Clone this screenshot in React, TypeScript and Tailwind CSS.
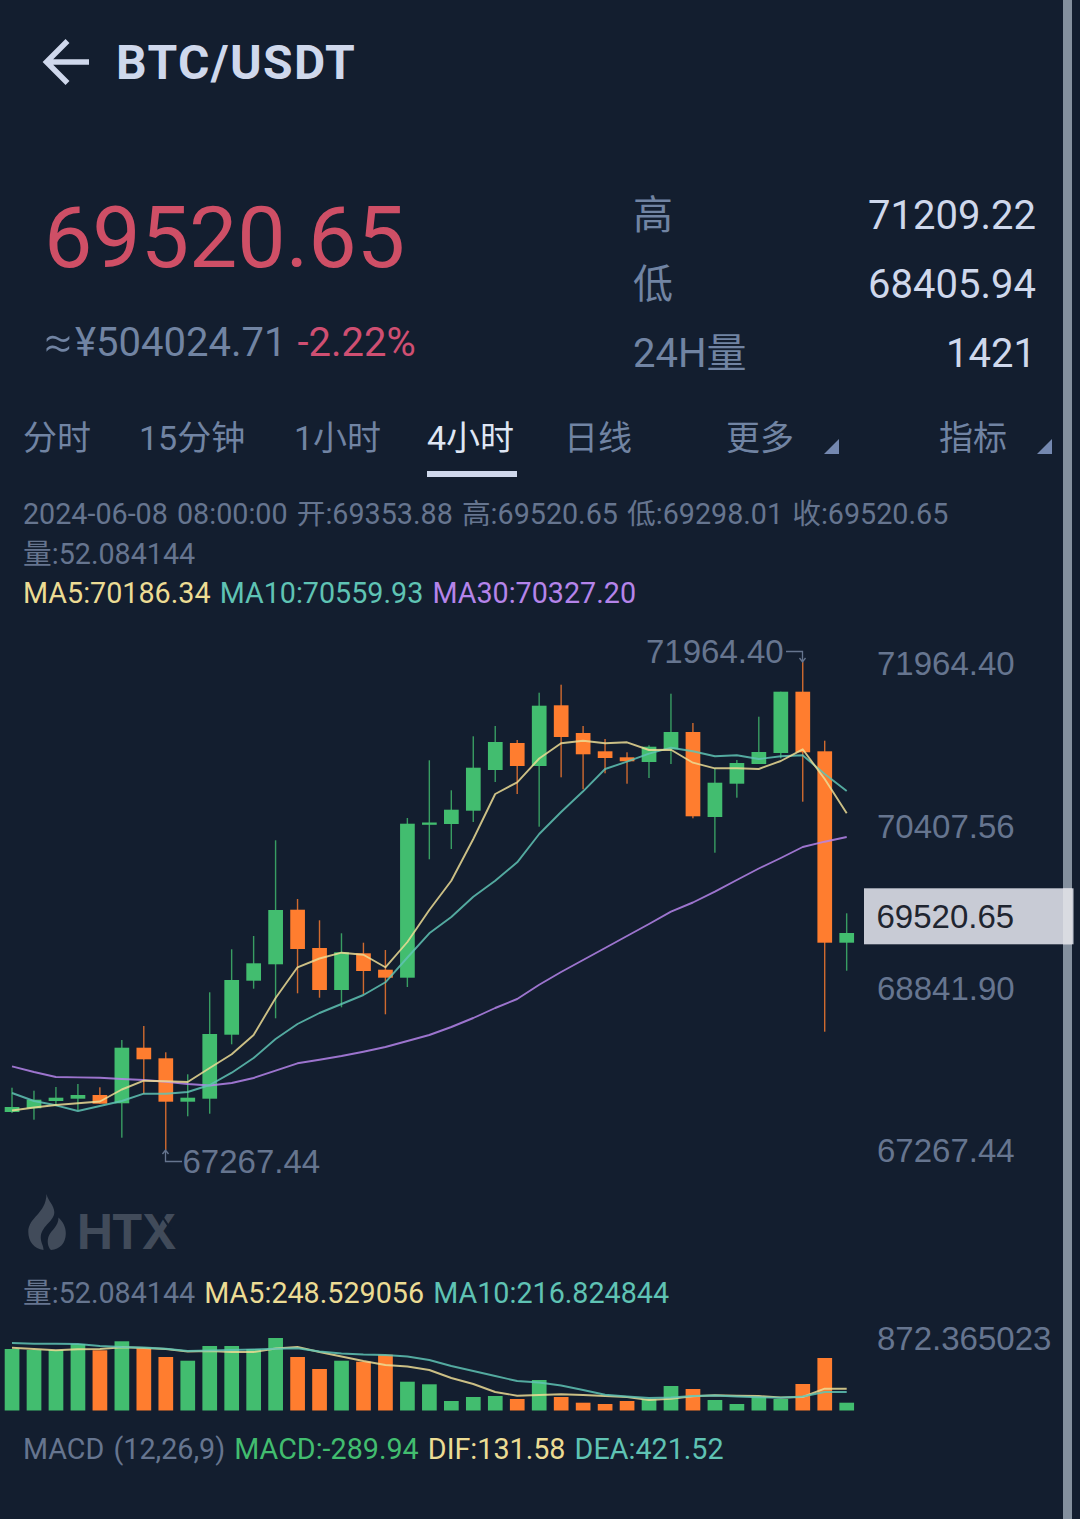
import React from 'react';

const UP = '#42bd6f';
const DOWN = '#ff7d2f';
const YELLOW = '#ecdc94';
const TEAL = '#5fc3b4';
const PURPLE = '#b584ea';

const STEP = 21.965;
const centerX = (i: number) => 12 + i * STEP;

// [rising, body top, body bottom, wick top, wick bottom]
const candles: [number, number, number, number, number][] = [
  [1, 1107, 1112, 1087.7, 1113],
  [1, 1099.7, 1108.3, 1090.7, 1119.7],
  [1, 1097.7, 1101, 1087, 1105],
  [1, 1095, 1098.7, 1084, 1110],
  [0, 1095, 1103.7, 1087.3, 1103.7],
  [1, 1047.7, 1103.3, 1040, 1137.7],
  [0, 1047.7, 1059.3, 1026, 1094],
  [0, 1058.3, 1101.7, 1052.3, 1150],
  [1, 1097.7, 1101.7, 1074.3, 1116.3],
  [1, 1034, 1098.7, 992.3, 1113.7],
  [1, 980, 1034.7, 949.3, 1044.3],
  [1, 963.3, 980.7, 936, 988.7],
  [1, 910, 964.3, 840.3, 1018.3],
  [0, 909.7, 949, 899, 993.3],
  [0, 948, 990, 920.3, 997.7],
  [1, 952.3, 990, 933.3, 1007.3],
  [0, 953.3, 971, 942.7, 994],
  [0, 969.7, 977.7, 950, 1014.3],
  [1, 823.7, 977.7, 818, 987],
  [1, 822.5, 824.8, 760.3, 859.3],
  [1, 809.7, 824, 790.3, 849],
  [1, 767.7, 810.7, 736.3, 822],
  [1, 742, 770, 726, 782],
  [0, 743, 766, 740, 794],
  [1, 705.7, 766, 692.7, 826.7],
  [0, 705.3, 737, 684.7, 777.3],
  [0, 733, 754.3, 726, 789.3],
  [0, 751.3, 758, 739, 773.3],
  [0, 757.3, 761.3, 752.3, 783.7],
  [1, 746.7, 762, 745.3, 778],
  [1, 732, 749.3, 693.7, 764],
  [0, 732, 816.3, 723, 818.3],
  [1, 782.7, 817, 768.3, 852.7],
  [1, 763, 783.7, 760, 797.7],
  [1, 752, 764, 716.7, 764],
  [1, 691.7, 753, 691.7, 758.3],
  [0, 691.7, 752.3, 661.7, 801.7],
  [0, 751.3, 942.7, 740.7, 1031.7],
  [1, 933, 942.7, 913.3, 970.7],
];

const ma5 = [
  1110.5, 1107.5, 1105, 1103.3, 1101.5, 1089.5, 1080.7, 1081.3, 1082, 1068, 1054.3, 1035, 998, 967.3, 958.5, 952.7,
  954.7, 967.3, 942, 910, 880.7, 839, 794, 782.3, 758.5, 743.3, 740.8, 743.3, 742.3, 750, 749.7, 762.7, 768.3, 768.3,
  769, 761, 749.3, 779, 813.3,
];
const ma10 = [
  1093, 1101, 1105.3, 1111, 1106, 1101, 1093.7, 1093.7, 1092, 1085, 1072.7, 1058, 1039, 1024, 1013, 1004, 995, 982.3,
  957.5, 933.3, 917, 896.7, 880.7, 862.3, 834, 812, 791.3, 769, 761.7, 753.7, 747.7, 751.3, 756.3, 755.3, 759, 756.3,
  755.3, 774, 791,
];
const ma30 = [
  1066.3, 1072, 1077, 1077.4, 1077.7, 1079, 1080, 1081.7, 1084, 1085.5, 1083, 1078, 1070.7, 1063.3, 1059.7, 1056,
  1051.7, 1047, 1041, 1035, 1027, 1018, 1008, 999, 984.7, 972, 960, 948, 936, 924, 911.7, 902.5, 891.7, 880, 868.5, 858,
  847, 841.7, 837,
];

const volumes = [
  1349, 1350, 1350, 1344, 1350.3, 1341.3, 1348.3, 1357, 1360.7, 1346, 1346, 1349, 1338, 1357, 1369, 1360.7, 1361.7,
  1354.7, 1381.7, 1384.3, 1401, 1397, 1396, 1399, 1380, 1397, 1402.7, 1404, 1401, 1399, 1386, 1389, 1400, 1404, 1397,
  1399, 1384, 1358, 1402.7,
];
const volMa5 = [
  1347.7, 1349, 1350.3, 1349.3, 1349, 1347.3, 1348, 1349, 1351.5, 1351, 1352, 1352, 1348.5, 1347, 1352, 1356.5, 1361,
  1365, 1366.5, 1370, 1378, 1384, 1392, 1395.7, 1395, 1394.3, 1395, 1396, 1397, 1400, 1398.7, 1396.3, 1395.3, 1395.7,
  1396, 1397.5, 1397, 1388.7, 1388.7,
];
const volMa10 = [
  1343, 1343.7, 1343.7, 1344, 1346, 1347, 1347.5, 1348.7, 1351, 1350.5, 1350, 1349.5, 1348.7, 1348.3, 1351.5, 1353.5,
  1354.5, 1355, 1356.5, 1360, 1366, 1371, 1376, 1381, 1382.5, 1385.5, 1390, 1394.7, 1396.5, 1398, 1397.5, 1396, 1395.5,
  1396.5, 1397.3, 1397.7, 1396.5, 1392, 1392,
];

const stats = [
  { label: '高', value: '71209.22' },
  { label: '低', value: '68405.94' },
  { label: '24H量', value: '1421' },
];

const tabs = [
  { label: '分时' },
  { label: '15分钟' },
  { label: '1小时' },
  { label: '4小时', active: true },
  { label: '日线' },
  { label: '更多', menu: true },
  { label: '指标', menu: true },
];

const axis = [
  { y: 675, value: '71964.40' },
  { y: 838, value: '70407.56' },
  { y: 999.5, value: '68841.90' },
  { y: 1162, value: '67267.44' },
];

function Line({ values, color }: { values: number[]; color: string }) {
  const points = values.map((y, i) => `${centerX(i).toFixed(1)},${y}`).join(' ');
  return <polyline points={points} fill="none" stroke={color} strokeWidth="1.9" strokeOpacity="0.85" strokeLinejoin="round" />;
}

function Header() {
  return (
    <header className="flex h-[124px] items-center pl-[42px] text-[#cfd8ec]">
      <svg width="48" height="48" viewBox="0 0 48 48" fill="none" stroke="currentColor" strokeWidth="5.5">
        <path d="M47 24H5M25.500 3L4.500 24L25.500 45" />
      </svg>
      <h1 className="mt-[2px] ml-[26px] text-[48px] leading-none font-bold tracking-[1.4px]">BTC/USDT</h1>
    </header>
  );
}

function Ticker() {
  return (
    <section className="flex h-[268px] justify-between pt-[56px] pr-[44px] pl-[44px]">
      <div>
        <div className="h-[116px] text-[86px] leading-[116px] text-[#cf4f66]">69520.65</div>
        <div className="mt-[23px] flex text-[40px] leading-[48px]">
          <span className="w-[31px] text-[50px] font-light text-[#7184a3]">≈</span>
          <span className="text-[#7184a3]">¥504024.71</span>
          <span className="ml-[11px] text-[#cf4f72]">-2.22%</span>
        </div>
      </div>
      <dl className="w-[403px] pt-px">
        {stats.map((item) => (
          <div key={item.label} className="flex h-[69px] items-center justify-between">
            <dt className="text-[40px] text-[#7184a3]">{item.label}</dt>
            <dd className="text-[40px] text-[#cfd8ec]">{item.value}</dd>
          </div>
        ))}
      </dl>
    </section>
  );
}

function Tabs() {
  return (
    <nav className="grid h-[85px] grid-cols-[116px_155px_133px_137px_162px_213px_1fr] pl-[23px] text-[34px] text-[#7184a3]">
      {tabs.map((tab) => (
        <div key={tab.label} className="flex items-start">
          <div
            className={
              tab.active
                ? 'h-[85px] w-[90px] border-b-[6px] border-[#cfd8ec] leading-[92px] whitespace-nowrap text-[#dfe6f4]'
                : 'leading-[92px] whitespace-nowrap'
            }
          >
            {tab.label}
          </div>
          {tab.menu && (
            <svg width="15" height="15" viewBox="0 0 15 15" className="mt-[47px] ml-[30px]">
              <path d="M15 0V15H0Z" fill="#7488b0" />
            </svg>
          )}
        </div>
      ))}
    </nav>
  );
}

function PriceChart() {
  return (
    <svg width="1080" height="570" viewBox="0 620 1080 570" className="block">
      {candles.map(([up, top, bottom, high, low], i) => (
        <g key={i} fill={up ? UP : DOWN}>
          <rect x={centerX(i) - 0.7} y={high} width="1.4" height={low - high} opacity="0.8" />
          <rect x={centerX(i) - 7.3} y={top} width="14.7" height={bottom - top} />
        </g>
      ))}
      <Line values={ma30} color={PURPLE} />
      <Line values={ma10} color={TEAL} />
      <Line values={ma5} color={YELLOW} />

      <g fill="none" stroke="#66758f" strokeWidth="1.3">
        <path d="M786 651.5H802.5V662M799.5 658L802.5 662L805.5 658" />
        <path d="M182 1161.5H165.5V1150M162.5 1154L165.5 1150L168.5 1154" />
      </g>

      <g className="font-['Liberation_Sans',sans-serif] text-[33px]" fill="#66758f">
        <text x="646" y="663">71964.40</text>
        <text x="182.500" y="1173">67267.44</text>
        {axis.map((tick) => (
          <text key={tick.value} x="877" y={tick.y}>{tick.value}</text>
        ))}
        <rect x="864" y="888.3" width="209.5" height="56" fill="#c8cbd5" />
        <rect x="1063" y="888.3" width="9" height="56" fill="#d9dbe1" />
        <text x="876.500" y="928" fill="#1f2530">69520.65</text>
      </g>
    </svg>
  );
}

function Watermark() {
  return (
    <svg width="180" height="80" viewBox="0 1190 180 80" className="block" fill="#414b5a">
      <path d="M46.500 1194C48 1201 54 1205 54.300 1212C54.500 1221 42.500 1225 40.800 1236C40.200 1242 43.500 1245 43.500 1250C34 1249 28.300 1241 28.300 1232C28.300 1217 46 1214 46.500 1194Z" />
      <path d="M58.500 1217.500C63 1222 66 1227 65.800 1234C65.500 1243 60 1249.500 51 1250C47.500 1247 46.800 1240 49 1235.500C51.500 1230 58.500 1226 58.500 1217.500Z" />
      <text x="77" y="1249" textLength="100" className="font-['Inter',sans-serif] text-[48px] font-bold">HTX</text>
      <path d="M160.500 1214L170.500 1229" stroke="#131e2f" strokeWidth="2.2" />
    </svg>
  );
}

function VolumeChart() {
  return (
    <svg width="1080" height="100" viewBox="0 1315 1080 100" className="block">
      {volumes.map((top, i) => (
        <rect key={i} x={centerX(i) - 7.3} y={top} width="14.7" height={1410.5 - top} fill={candles[i][0] ? UP : DOWN} />
      ))}
      <Line values={volMa5} color={YELLOW} />
      <Line values={volMa10} color={TEAL} />
      <text x="877" y="1350" fill="#66758f" className="font-['Liberation_Sans',sans-serif] text-[33px]">872.365023</text>
    </svg>
  );
}

export default function App() {
  return (
    <main className="relative h-[1519px] w-[1080px] overflow-hidden bg-[#131e2f] font-['Roboto','Noto_Sans_CJK_SC',sans-serif]">
      <div className="absolute inset-y-0 left-[1063px] w-[9px] bg-[#84909e]" />
      <div className="relative">
        <Header />
        <Ticker />
        <Tabs />
        <div className="h-[143px] pt-[17px] pl-[23px] text-[28.7px] leading-[40px] [word-spacing:2px] whitespace-nowrap text-[#66758f]">
          <p>2024-06-08 08:00:00 开:69353.88 高:69520.65 低:69298.01 收:69520.65</p>
          <p>量:52.084144</p>
          <p className="-mt-px">
            <span className="text-[#ecdc94]">MA5:70186.34</span> <span className="text-[#5fc3b4]">MA10:70559.93</span>{' '}
            <span className="text-[#b584ea]">MA30:70327.20</span>
          </p>
        </div>
        <PriceChart />
        <Watermark />
        <p className="h-[45px] pl-[23px] text-[28.7px] leading-[46px] [word-spacing:2px] whitespace-nowrap text-[#66758f]">
          量:52.084144 <span className="text-[#ecdc94]">MA5:248.529056</span>{' '}
          <span className="text-[#5fc3b4]">MA10:216.824844</span>
        </p>
        <VolumeChart />
        <p className="pl-[23px] text-[28.7px] leading-[68px] [word-spacing:2px] whitespace-nowrap text-[#66758f]">
          MACD (12,26,9) <span className="text-[#42bd6f]">MACD:-289.94</span>{' '}
          <span className="text-[#ecdc94]">DIF:131.58</span> <span className="text-[#5fc3b4]">DEA:421.52</span>
        </p>
      </div>
    </main>
  );
}
